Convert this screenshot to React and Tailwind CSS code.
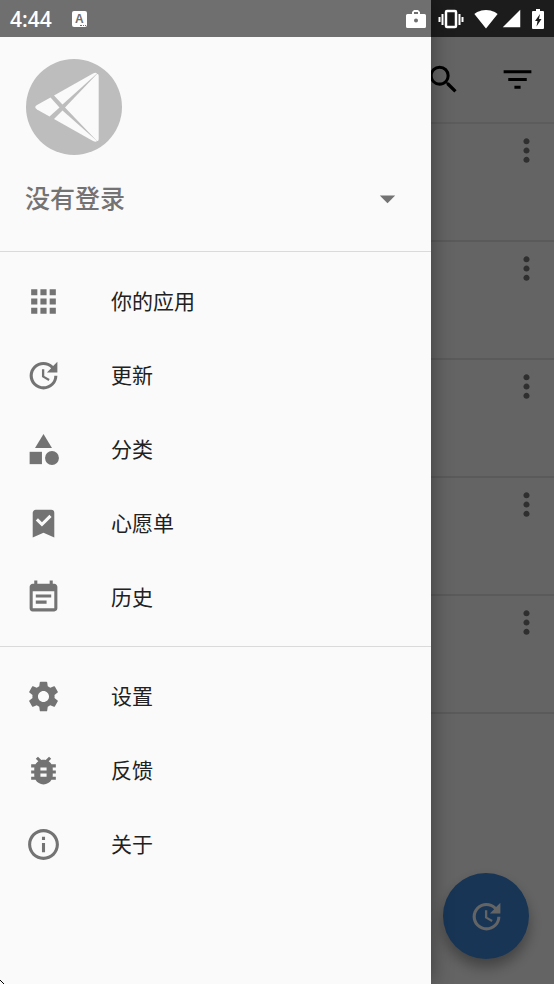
import React from 'react';
import {
  MdApps,
  MdUpdate,
  MdCategory,
  MdEventNote,
  MdSettings,
  MdBugReport,
  MdInfoOutline,
  MdSearch,
  MdFilterList,
  MdArrowDropDown,
  MdMoreVert,
  MdSignalWifi4Bar,
  MdSignalCellular4Bar
} from 'react-icons/md';

const BookmarkCheck = ({ className }) => (
  <svg viewBox="0 0 24 24" fill="currentColor" className={className}>
    <path d="M17 3a2 2 0 0 1 2 2v16l-7-3-7 3V5c0-1.1.9-2 2-2h10M11 14l6.25-6.24-1.41-1.42L11 11.18 8.41 8.59 7 10l4 4z" />
  </svg>
);

const Briefcase = ({ className }) => (
  <svg viewBox="0 0 20 20" fill="currentColor" fillRule="evenodd" className={className}>
    <path d="M6 5V3l2-2h4l2 2v2h4.500q1.500 0 1.500 1.500v11q0 1.500-1.500 1.500h-17Q0 19 0 17.500v-11Q0 5 1.500 5zM8 5h4V3H8zM10 9.500a2 2 0 1 0 0 4 2 2 0 0 0 0-4z" />
  </svg>
);

const Vibrate = ({ className }) => (
  <svg viewBox="0 0 26 20" fill="none" stroke="currentColor" strokeWidth="2" className={className}>
    <rect x="8" y="2" width="10" height="16" rx="1" strokeWidth="2.500" />
    <path d="M4.500 5v11M21.500 5v11M1.500 8v5M24.500 8v5" />
  </svg>
);

const BatteryCharging = ({ className }) => (
  <svg viewBox="0 0 12 20" fill="currentColor" fillRule="evenodd" className={className}>
    <path d="M4 0h4v2h3q1 0 1 1v16q0 1-1 1H1q-1 0-1-1V3q0-1 1-1h3zM8 5 3 12h2.500L4.500 17.500 9.500 10H7z" />
  </svg>
);

const Logo = () => (
  <svg viewBox="0 0 96 96" className="w-24 h-24" aria-hidden="true">
    <circle cx="48" cy="48" r="48" fill="#bdbdbd" />
    <g fill="#fafafa">
      <path d="M28 36.500 67 14.500Q70 13 71 14.500L36.500 45.500z" />
      <path d="M28 60 67 82Q70 83.500 71 82L36.500 51.500z" />
      <path d="M39 48.500 71 15Q72.700 14.500 72.700 17V80Q72.700 82.500 71 82z" />
      <path d="M24.500 38.500 33.500 48.500 23.500 57.500 11 50.500Q7.500 48 11 46z" />
    </g>
  </svg>
);

const mainItems = [
  { label: '你的应用', icon: MdApps },
  { label: '更新', icon: MdUpdate },
  { label: '分类', icon: MdCategory },
  { label: '心愿单', icon: BookmarkCheck },
  { label: '历史', icon: MdEventNote }
];

const moreItems = [
  { label: '设置', icon: MdSettings },
  { label: '反馈', icon: MdBugReport },
  { label: '关于', icon: MdInfoOutline }
];

const MenuList = ({ items }) => (
  <ul className="py-3">
    {items.map(({ label, icon: Icon }) => (
      <li key={label}>
        <a href="#" className="flex items-center h-[74px] pl-[25px]">
          <Icon className="w-[37px] h-[37px] text-[#737373]" />
          <span className="ml-[49px] pb-0.5 text-[21px] leading-8 text-[#212121]">{label}</span>
        </a>
      </li>
    ))}
  </ul>
);

const StatusBar = () => (
  <div className="absolute inset-x-0 top-0 z-20 h-[37px] flex items-center justify-between px-[10px] text-white">
    <div className="flex items-center gap-5">
      <span className="font-['Open_Sans'] text-[21px] leading-8 font-semibold">4:44</span>
      <span className="relative w-[15px] h-4 rounded-xs bg-white text-[#6f6f6f] font-['Liberation_Sans'] text-[12px] leading-4 font-bold text-center">
        A
        <span className="absolute right-px bottom-px w-1.5 border-b border-dotted border-[#6f6f6f]" />
      </span>
    </div>
    <div className="flex items-center">
      <Briefcase className="w-5 h-5" />
      <Vibrate className="w-[26px] h-5 ml-3" />
      <MdSignalWifi4Bar className="w-6 h-6 ml-[10px]" />
      <MdSignalCellular4Bar className="w-[21px] h-[21px] ml-[3px]" />
      <BatteryCharging className="w-3 h-5 ml-[10px]" />
    </div>
  </div>
);

const App = () => {
  return (
    <div className="relative min-h-screen overflow-hidden bg-[#fafafa] font-['Noto_Sans_CJK_SC',sans-serif]">
      <StatusBar />

      {/* App page below the drawer */}
      <main>
        <div className="h-[37px] bg-[#464646]" />
        <header className="flex items-center justify-end h-[87px] border-b-2 border-[#e6e6e6] text-black">
          <button type="button" aria-label="搜索" className="w-[74px] flex justify-center">
            <MdSearch className="w-[37px] h-[37px]" />
          </button>
          <button type="button" aria-label="筛选" className="w-[74px] flex justify-center">
            <MdFilterList className="w-[37px] h-[37px]" />
          </button>
        </header>
        <ul>
          {[1, 2, 3, 4, 5].map((row) => (
            <li key={row} className="flex items-start justify-end h-[118px] pt-2 pr-[9px] border-b-2 border-[#e2e2e2]">
              <button type="button" aria-label="更多" className="text-[#757575]">
                <MdMoreVert className="w-[37px] h-[37px]" />
              </button>
            </li>
          ))}
        </ul>
      </main>
      <button
        type="button"
        aria-label="检查更新"
        className="absolute right-[25px] bottom-[25px] w-[86px] h-[86px] rounded-full bg-[#3c85d6] text-[#fafafa] shadow-[0_8px_14px_rgba(0,0,0,0.35)] flex items-center justify-center"
      >
        <MdUpdate className="w-[37px] h-[37px]" />
      </button>

      {/* Scrim */}
      <div className="absolute inset-0 bg-black/60" />

      {/* Drawer */}
      <aside className="absolute inset-y-0 left-0 z-10 w-7/9 bg-[#fafafa] shadow-[0_0_20px_rgba(0,0,0,0.4)]">
        <div className="h-[37px] bg-[#6f6f6f]" />
        <div className="pt-[22px] pb-4 border-b border-[#dadada]">
          <div className="pl-[26px]">
            <Logo />
          </div>
          <button type="button" className="mt-1.5 w-full h-[74px] flex items-center justify-between px-[25px] text-[#737373]">
            <span className="pb-0.5 text-[25px] leading-9 font-medium">没有登录</span>
            <MdArrowDropDown className="w-[37px] h-[37px]" />
          </button>
        </div>
        <nav>
          <MenuList items={mainItems} />
          <hr className="border-[#dadada]" />
          <MenuList items={moreItems} />
        </nav>
        <svg viewBox="0 0 4 4" className="absolute left-0 bottom-0 w-1 h-1" aria-hidden="true">
          <path d="M0 0 4 4" stroke="#000" />
        </svg>
      </aside>
    </div>
  );
};

export default App;
